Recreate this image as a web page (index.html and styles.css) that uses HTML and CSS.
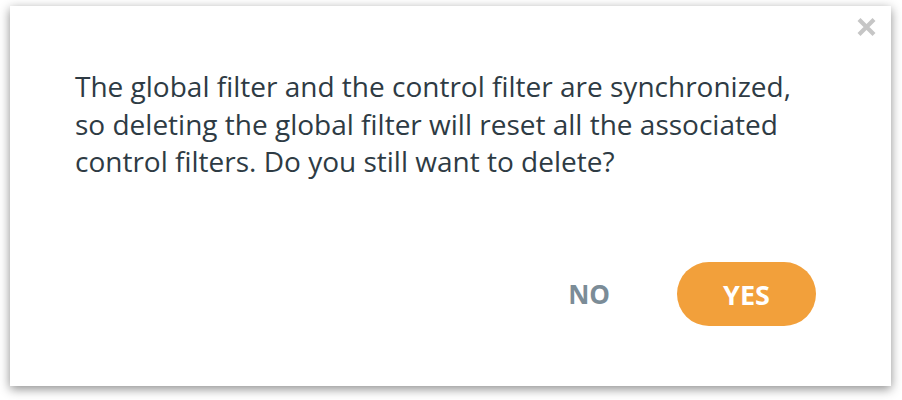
FILE: index.html
```html
<!DOCTYPE html>
<html>
<head>
<meta charset="utf-8">
<link rel="stylesheet" href="styles.css">
</head>
<body>
<div class="dialog">
  <button class="close" aria-label="Close">
    <svg width="21" height="20" viewBox="0 0 21 20"><path d="M3 2.5L18 17.5M18 2.5L3 17.5" stroke="#c6c6c6" stroke-width="4.2" stroke-linecap="butt"/></svg>
  </button>
  <p class="message">The global filter and the control filter are synchronized, so deleting the global filter will reset all the associated control filters. Do you still want to delete?</p>
  <div class="actions">
    <button class="btn-no">NO</button>
    <button class="btn-yes">YES</button>
  </div>
</div>
</body>
</html>
```
FILE: styles.css
```css
html, body {
  margin: 0;
  padding: 0;
  background: #ffffff;
}
body {
  padding: 6px 0 14px 10px;
  min-height: 400px;
  box-sizing: border-box;
  font-family: "Open Sans", "Noto Sans", sans-serif;
}
.dialog {
  position: relative;
  width: 881px;
  height: 380px;
  box-sizing: border-box;
  background: #fff;
  box-shadow: 0 3px 10px rgba(0,0,0,0.45);
  padding: 62px 75px 0 65px;
  display: flex;
  flex-direction: column;
}
.close {
  position: absolute;
  top: 11px;
  right: 14px;
  border: 0;
  background: none;
  padding: 0;
  width: 21px;
  height: 20px;
}
.close svg { display: block; }
.message {
  margin: 0;
  font-size: 28px;
  line-height: 37.5px;
  color: #2e3b44;
  max-width: 745px;
}
.actions {
  margin-top: auto;
  margin-bottom: 60px;
  display: flex;
  justify-content: flex-end;
  align-items: center;
  gap: 38px;
}
.btn-no {
  border: 0;
  background: none;
  font-family: inherit;
  font-weight: 700;
  font-size: 26px;
  color: #7b8c97;
  padding: 0 29px;
  height: 64px;
}
.btn-yes {
  border: 0;
  background: #f2a03b;
  color: #fff;
  font-family: inherit;
  font-weight: 700;
  font-size: 27px;
  width: 139px;
  height: 64px;
  border-radius: 32px;
}
```
